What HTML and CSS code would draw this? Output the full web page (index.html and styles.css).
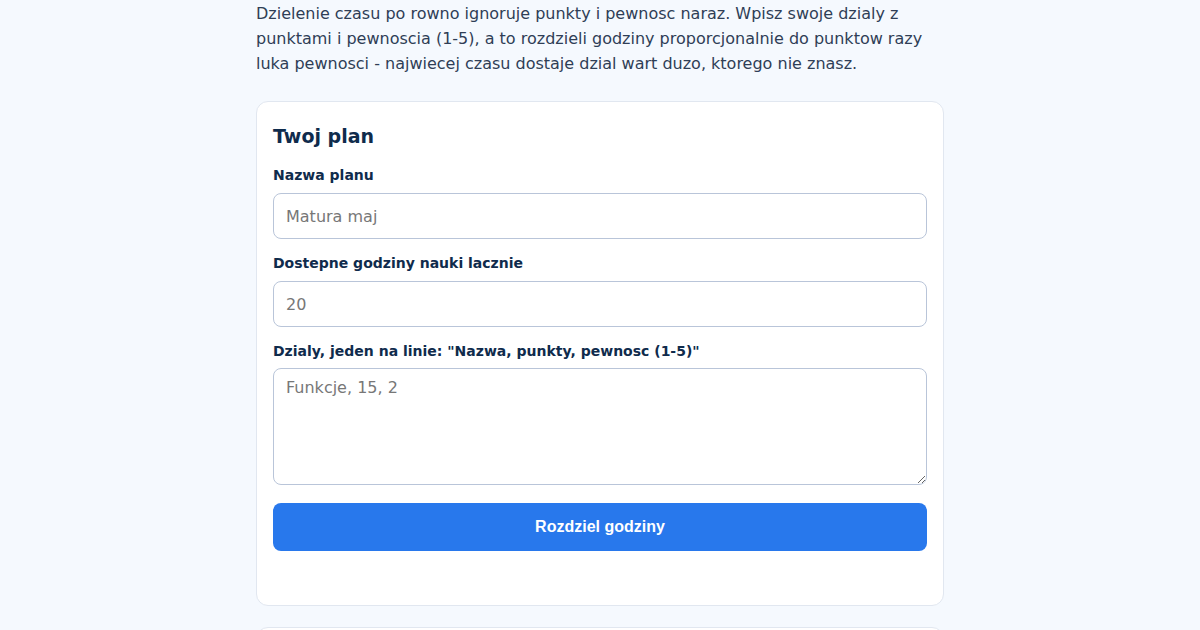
FILE: index.html
```html
<!DOCTYPE html>
<html lang="pl">
<head>
    <meta charset="UTF-8">
    <meta name="viewport" content="width=device-width, initial-scale=1.0">
    <title>Planer nauki</title>
    <link rel="stylesheet" href="styles.css">
</head>
<body>
    <div class="container">
        <p class="intro">Dzielenie czasu po rowno ignoruje punkty i pewnosc naraz. Wpisz swoje dzialy z punktami i pewnoscia (1-5), a to rozdzieli godziny proporcjonalnie do punktow razy luka pewnosci - najwiecej czasu dostaje dzial wart duzo, ktorego nie znasz.</p>

        <div class="card">
            <h2>Twoj plan</h2>
            <form id="planForm">
                <div class="form-group">
                    <label for="name">Nazwa planu</label>
                    <input type="text" id="name" placeholder="Matura maj">
                </div>
                <div class="form-group">
                    <label for="hours">Dostepne godziny nauki lacznie</label>
                    <input type="number" id="hours" placeholder="20">
                </div>
                <div class="form-group">
                    <label for="topics">Dzialy, jeden na linie: "Nazwa, punkty, pewnosc (1-5)"</label>
                    <textarea id="topics" rows="4" placeholder="Funkcje, 15, 2"></textarea>
                </div>
                <button type="submit" class="btn">Rozdziel godziny</button>
            </form>
        </div>

        <div class="card results" id="results"></div>
    </div>
</body>
</html>
```

FILE: styles.css
```css
body {
    font-family: "DejaVu Sans", sans-serif;
    background-color: #f5f9fe;
    color: #2f3e56;
    margin: 0;
    padding: 0;
}

.container {
    max-width: 688px;
    margin: 0 auto;
}

.intro {
    font-size: 16px;
    line-height: 25px;
    margin: 1px 0 25px;
}

.card {
    background: #fff;
    border: 1px solid #e1e7f0;
    border-radius: 12px;
    padding: 21px 16px 54px;
    margin-bottom: 21px;
}

.card h2 {
    color: #0f2b4c;
    font-size: 19px;
    line-height: 26px;
    margin: 0 0 16px;
}

.results {
    min-height: 120px;
}

.form-group {
    margin-bottom: 14px;
}

.form-group label {
    display: block;
    color: #0f2b4c;
    font-size: 14px;
    font-weight: bold;
    line-height: 20px;
    margin-bottom: 8px;
}

.form-group input,
.form-group textarea {
    display: block;
    box-sizing: border-box;
    width: 100%;
    font-family: inherit;
    font-size: 16px;
    color: #2f3e56;
    padding: 10px 12px;
    border: 1px solid #b9c5d9;
    border-radius: 8px;
    background: #fff;
}

.form-group input {
    height: 46px;
}

.form-group textarea {
    height: 117px;
    line-height: 20px;
    padding-top: 9px;
    margin-top: -1px;
}

.form-group input::placeholder,
.form-group textarea::placeholder {
    color: #777;
}

.btn {
    display: block;
    width: 100%;
    height: 48px;
    margin-top: 18px;
    color: #fff;
    background: #2878ec;
    border: none;
    border-radius: 8px;
    cursor: pointer;
    font-family: "Liberation Sans", Arial, sans-serif;
    font-size: 16px;
    font-weight: bold;
}

.btn:hover {
    background: #1f6ad6;
}
```
